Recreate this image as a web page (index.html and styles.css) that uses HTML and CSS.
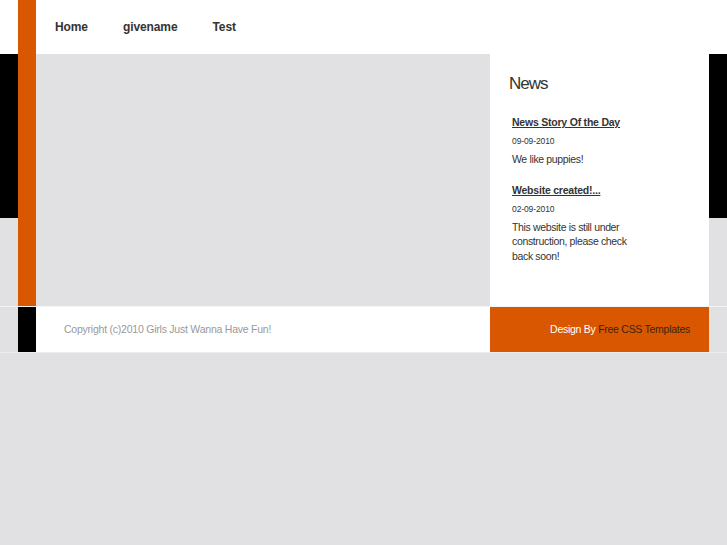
FILE: index.html
```html
<!DOCTYPE html>
<html>

<head>
    <title>Girls Just Wanna Have Fun!</title>
    <link rel="stylesheet" href="styles.css">
</head>

<body>
    <div class="row header-row">
        <div class="stripe orange"></div>
        <div class="nav">
            <a href="#">Home</a>
            <a href="#">givename</a>
            <a href="#">Test</a>
        </div>
    </div>
    <div class="row main-row">
        <div class="stripe orange"></div>
        <div class="content"></div>
        <div class="sidebar">
            <h2>News</h2>
            <div class="news-item">
                <a class="news-title" href="#">News Story Of the Day</a>
                <div class="news-date">09-09-2010</div>
                <p>We like puppies!</p>
            </div>
            <div class="news-item">
                <a class="news-title" href="#">Website created!...</a>
                <div class="news-date">02-09-2010</div>
                <p>This website is still under construction, please check back soon!</p>
            </div>
        </div>
    </div>
    <div class="row footer-row">
        <div class="stripe black"></div>
        <div class="copyright">Copyright (c)2010 Girls Just Wanna Have Fun!</div>
        <div class="design">Design By <a href="#">Free CSS Templates</a></div>
    </div>
</body>

</html>
```

FILE: styles.css
```css
body {
    margin: 0;
    padding: 0;
    background-color: #e1e1e3;
    font-family: "Liberation Sans", Arial, sans-serif;
    color: #333;
}

.row {
    display: flex;
    padding: 0 18px;
}

.stripe {
    width: 18px;
    flex-shrink: 0;
}

.orange {
    background-color: #d95700;
}

.black {
    background-color: #000;
}

/* top navigation */
.header-row {
    height: 54px;
    background-color: #fff;
}

.nav {
    display: flex;
    align-items: center;
    gap: 35px;
    padding-left: 19px;
}

.nav a {
    font-size: 12px;
    font-weight: bold;
    color: #333;
    text-decoration: none;
    letter-spacing: -0.1px;
}

/* middle part */
.main-row {
    height: 252px;
    background: linear-gradient(#000 0, #000 164px, #e1e1e3 164px);
}

.content {
    width: 454px;
    background-color: #e1e1e3;
}

.sidebar {
    width: 219px;
    background-color: #fff;
    padding: 0 0 0 19px;
    box-sizing: border-box;
}

.sidebar h2 {
    margin: 20px 0 18px;
    font-size: 17px;
    font-weight: normal;
    letter-spacing: -1px;
    color: #333;
}

.news-item {
    width: 130px;
    padding-left: 3px;
    margin-bottom: 13px;
}

.news-title {
    font-size: 10.5px;
    font-weight: bold;
    color: #333;
    text-decoration: underline;
    letter-spacing: -0.22px;
}

.news-date {
    font-size: 8.5px;
    margin-top: 6px;
    letter-spacing: -0.1px;
}

.news-item p {
    margin: 6px 0 0;
    font-size: 10.5px;
    line-height: 14.5px;
    letter-spacing: -0.35px;
}

/* footer */
.footer-row {
    height: 45px;
    border-top: 1px solid #f4f4f4;
    border-bottom: 1px solid #ececee;
}

.copyright {
    width: 454px;
    background-color: #fff;
    padding-left: 28px;
    box-sizing: border-box;
    font-size: 10.5px;
    color: #999;
    line-height: 45px;
    letter-spacing: -0.23px;
}

.design {
    width: 219px;
    background-color: #d95700;
    padding-right: 19px;
    box-sizing: border-box;
    text-align: right;
    font-size: 10.5px;
    color: #fff;
    line-height: 45px;
    letter-spacing: -0.27px;
}

.design a {
    color: #3a2510;
    text-decoration: none;
}
```
